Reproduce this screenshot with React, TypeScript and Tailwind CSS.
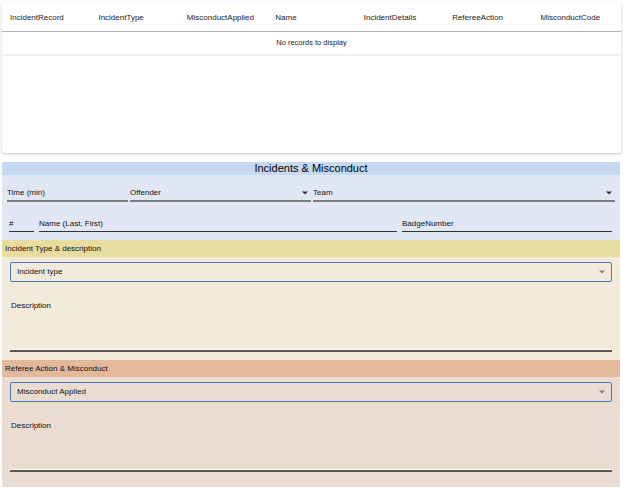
import React from "react";

const columns = [
  "IncidentRecord",
  "IncidentType",
  "MisconductApplied",
  "Name",
  "IncidentDetails",
  "RefereeAction",
  "MisconductCode",
];

function Caret({ className }: { className?: string }) {
  return (
    <svg width="6" height="4" viewBox="0 0 6 4" className={className}>
      <path d="M0 0.5h6L3 3.5z" fill="currentColor" />
    </svg>
  );
}

function FilledField({ label, select, className }: { label: string; select?: boolean; className?: string }) {
  return (
    <div className={`flex items-end justify-between h-[24px] border-b-2 border-[#7d7d7d] ${className ?? ""}`}>
      <span className="text-[8px] text-[#111] leading-none pb-[3px]">{label}</span>
      {select && <Caret className="text-[#333] mb-[5px] mr-[3px]" />}
    </div>
  );
}

function LineField({ label, className }: { label: string; className?: string }) {
  return (
    <div className={`flex items-end h-[20px] border-b border-[#333] ${className ?? ""}`}>
      <span className="text-[8px] text-[#111] leading-none pb-[3px]">{label}</span>
    </div>
  );
}

function OutlinedSelect({ label }: { label: string }) {
  return (
    <div className="flex items-center justify-between h-[20px] mx-[8px] px-[6px] border border-[#4a76c0] rounded-[2px]">
      <span className="text-[8px] text-[#111] leading-none">{label}</span>
      <Caret className="text-[#6b82a8]" />
    </div>
  );
}

function Description() {
  return (
    <div className="mx-[8px] mt-[18px] h-[52px] flex flex-col justify-between border-b-2 border-[#5c564c] shadow-[0_-1px_0_#ffffff_inset]">
      <span className="text-[8px] text-[#111] leading-none pl-[1px] pt-[2px]">Description</span>
    </div>
  );
}

export default function App() {
  return (
    <div className="w-[623px] h-[500px] bg-white px-[2px] pt-[2px] antialiased font-['Liberation_Sans',Arial,sans-serif]">
      {/* Records table */}
      <div className="h-[151px] bg-white rounded-[3px] shadow-[0_1px_3px_rgba(0,0,0,0.25)] flex flex-col">
        <div className="grid grid-cols-7 h-[30px] items-center border-b border-[#b5b5b5]">
          {columns.map((c) => (
            <div key={c} className="px-[8px] pt-[2px] text-[8px] text-[#222] leading-none">
              {c}
            </div>
          ))}
        </div>
        <div className="h-[24px] flex items-center justify-center border-b-2 border-[#f1f1f1] text-[7.5px] text-[#222]">
          No records to display
        </div>
      </div>

      {/* Incidents & Misconduct */}
      <div className="mt-[9px] w-[618px]">
        <div className="h-[13px] bg-[#c6d9f0] flex items-center justify-center text-[11px] text-black leading-none">
          Incidents &amp; Misconduct
        </div>
        <div className="h-[65px] bg-[#e1e7f5] px-[5px] pt-[3px]">
          <div className="flex gap-[2px]">
            <FilledField label="Time (min)" className="w-[121px]" />
            <FilledField label="Offender" select className="w-[181px]" />
            <FilledField label="Team" select className="flex-1" />
          </div>
          <div className="flex mt-[10px] pl-[2px] pr-[3px]">
            <LineField label="#" className="w-[25px]" />
            <LineField label="Name (Last, First)" className="w-[358px] ml-[5px]" />
            <LineField label="BadgeNumber" className="flex-1 ml-[5px]" />
          </div>
        </div>

        <div className="h-[17px] bg-[#e8dc9f] flex items-center px-[3px] text-[8px] text-[#111]">
          Incident Type &amp; description
        </div>
        <div className="h-[103px] bg-[#f2eadb] pt-[5px]">
          <OutlinedSelect label="Incident type" />
          <Description />
        </div>

        <div className="h-[17px] bg-[#e4b99b] flex items-center px-[3px] text-[8px] text-[#111]">
          Referee Action &amp; Misconduct
        </div>
        <div className="h-[110px] bg-[#eadcd0] pt-[5px]">
          <OutlinedSelect label="Misconduct Applied" />
          <Description />
        </div>
      </div>
    </div>
  );
}
